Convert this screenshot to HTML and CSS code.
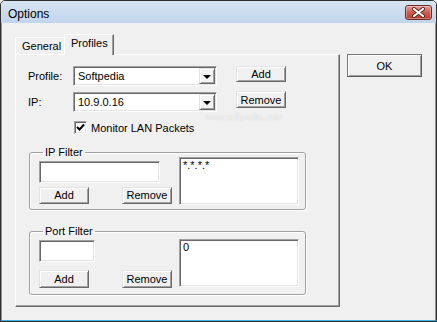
FILE: index.html
```html
<!DOCTYPE html>
<html lang="en">

<head>
    <meta charset="UTF-8">
    <title>Options</title>
    <link rel="stylesheet" href="styles.css">
</head>

<body>
    <div class="window">
        <div class="titlebar">
            <span class="title">Options</span>
            <span class="close">
                <svg width="15" height="11" viewBox="0 0 15 11">
                    <path d="M3 2 L12 9 M12 2 L3 9" stroke="#5a2420" stroke-width="4" stroke-linecap="round" />
                    <path d="M3 2 L12 9 M12 2 L3 9" stroke="#ffffff" stroke-width="2.2" stroke-linecap="round" />
                </svg>
            </span>
        </div>

        <div class="client">
            <div class="tabs">
                <div class="tab-strip">
                    <div class="tab">General</div>
                    <div class="tab active">Profiles</div>
                </div>

                <div class="tab-page">
                    <div class="row">
                        <span class="field-label">Profile:</span>
                        <div class="combo">
                            <span class="combo-text">Softpedia</span>
                            <span class="combo-btn"></span>
                        </div>
                        <button class="btn btn-top">Add</button>
                    </div>

                    <div class="row row-ip">
                        <span class="field-label">IP:</span>
                        <div class="combo">
                            <span class="combo-text">10.9.0.16</span>
                            <span class="combo-btn"></span>
                        </div>
                        <button class="btn btn-top btn-remove-top">Remove</button>
                    </div>

                    <div class="check-row">
                        <span class="checkbox">
                            <svg width="9" height="9" viewBox="0 0 9 9">
                                <path d="M1 4 L3.5 6.5 L8 1.5" fill="none" stroke="#000" stroke-width="2" />
                            </svg>
                        </span>
                        <span>Monitor LAN Packets</span>
                    </div>

                    <fieldset class="group group-ip">
                        <legend>IP Filter</legend>
                        <div class="group-body">
                            <div class="group-left">
                                <div class="textbox textbox-wide"></div>
                                <div class="btn-row">
                                    <button class="btn btn-filter">Add</button>
                                    <button class="btn btn-filter">Remove</button>
                                </div>
                            </div>
                            <div class="listbox">*.*.*.*</div>
                        </div>
                    </fieldset>

                    <fieldset class="group group-port">
                        <legend>Port Filter</legend>
                        <div class="group-body">
                            <div class="group-left">
                                <div class="textbox textbox-narrow"></div>
                                <div class="btn-row">
                                    <button class="btn btn-filter">Add</button>
                                    <button class="btn btn-filter">Remove</button>
                                </div>
                            </div>
                            <div class="listbox">0</div>
                        </div>
                    </fieldset>

                    <div class="watermark-url">www.softpedia.com</div>
                </div>
            </div>

            <div class="side">
                <button class="btn btn-ok">OK</button>
            </div>
        </div>
    </div>
</body>
</html>
```

FILE: styles.css
```css
body {
    margin: 0;
    padding: 0;
    font-family: "Liberation Sans", Arial, sans-serif;
    font-size: 11px;
    color: #000000;
    background-color: #f0f0f0;
}

.window {
    width: 437px;
    height: 322px;
    box-sizing: border-box;
    border: 1px solid #2f2f2f;
    border-radius: 5px 5px 0 0;
    display: flex;
    flex-direction: column;
    overflow: hidden;
}

.titlebar {
    height: 22px;
    flex: none;
    display: flex;
    justify-content: space-between;
    align-items: flex-start;
    padding: 0 4px 0 7px;
    background: linear-gradient(#d7e5f3, #c0d5ec);
}

.title {
    font-size: 12px;
    line-height: 12px;
    margin-top: 7px;
}

.close {
    width: 25px;
    height: 13px;
    margin-top: 4px;
    border: 1px solid #6e2a24;
    border-radius: 3px;
    background: linear-gradient(#e6a096, #cf5c50 50%, #c0392e);
    box-shadow: inset 0 0 0 1px rgba(255, 255, 255, 0.35);
    display: flex;
    justify-content: center;
    align-items: center;
}

.client {
    flex: 1;
    display: flex;
    align-items: flex-start;
    padding: 11px 0 0 13px;
    border: 1px solid #3cb2e4;
    border-top: none;
    background-color: #f0f0f0;
}

/* tabs */
.tabs {
    width: 325px;
    display: flex;
    flex-direction: column;
}

.tab-strip {
    height: 20px;
    display: flex;
    align-items: flex-end;
}

.tab {
    height: 17px;
    box-sizing: border-box;
    padding: 2px 0 0 6px;
    width: 49px;
    border-top: 1px solid #ffffff;
    border-left: 1px solid #ffffff;
    line-height: 13px;
}

.tab.active {
    height: 21px;
    width: 50px;
    margin-bottom: -1px;
    padding-top: 2px;
    position: relative;
    z-index: 1;
    background-color: #f0f0f0;
    border-right: 1px solid #696969;
    box-shadow: inset -1px 0 #a0a0a0;
}

.tab-page {
    position: relative;
    height: 253px;
    box-sizing: border-box;
    padding: 11px 0 0 12px;
    border-top: 1px solid #ffffff;
    border-left: 1px solid #ffffff;
    border-right: 1px solid #696969;
    border-bottom: 1px solid #696969;
    box-shadow: inset -1px -1px #a0a0a0;
}

/* profile rows */
.row {
    display: flex;
    align-items: flex-start;
}

.row-ip {
    margin-top: 6px;
}

.field-label {
    width: 45px;
    line-height: 20px;
}

.combo {
    width: 144px;
    height: 20px;
    box-sizing: border-box;
    background-color: #ffffff;
    border: 1px solid;
    border-color: #a0a0a0 #ffffff #ffffff #a0a0a0;
    box-shadow: inset 1px 1px #696969, inset -1px -1px #e3e3e3;
    display: flex;
    justify-content: space-between;
    align-items: center;
    padding: 0 1px 0 4px;
}

.combo-text {
    line-height: 16px;
}

.combo-btn {
    width: 16px;
    height: 16px;
    box-sizing: border-box;
    background-color: #f4f4f4;
    border: 1px solid;
    border-color: #e3e3e3 #696969 #696969 #e3e3e3;
    box-shadow: inset 1px 1px #ffffff, inset -1px -1px #a0a0a0;
    display: flex;
    justify-content: center;
    align-items: center;
}

.combo-btn::after {
    content: "";
    border-left: 4px solid transparent;
    border-right: 4px solid transparent;
    border-top: 4px solid #000000;
    margin-top: 1px;
}

/* buttons */
.btn {
    font-family: inherit;
    font-size: 11px;
    color: #000000;
    background-color: #f0f0f0;
    box-sizing: border-box;
    padding: 0;
    border: 1px solid;
    border-color: #e3e3e3 #696969 #696969 #e3e3e3;
    box-shadow: inset 1px 1px #ffffff, inset -1px -1px #a0a0a0;
    border-radius: 0;
    cursor: pointer;
}

.btn-top {
    width: 50px;
    height: 16px;
    margin-left: 19px;
    line-height: 12px;
}

.btn-remove-top {
    height: 17px;
    margin-top: -1px;
}

.btn-filter {
    width: 50px;
    height: 17px;
    line-height: 13px;
}

.btn-ok {
    width: 75px;
    height: 23px;
    margin: 20px 0 0 7px;
    border-color: #7a7a7a #595959 #595959 #7a7a7a;
    box-shadow: inset 1px 1px #ffffff, inset -1px -1px #a0a0a0;
}

/* checkbox */
.check-row {
    display: flex;
    align-items: center;
    margin: 9px 0 0 46px;
    height: 13px;
}

.checkbox {
    width: 13px;
    height: 13px;
    box-sizing: border-box;
    margin-right: 4px;
    background-color: #ffffff;
    border: 1px solid;
    border-color: #a0a0a0 #ffffff #ffffff #a0a0a0;
    box-shadow: inset 1px 1px #696969, inset -1px -1px #e3e3e3;
    display: flex;
    justify-content: center;
    align-items: center;
}

/* group boxes */
.group {
    width: 277px;
    box-sizing: border-box;
    margin: 13px 0 0 1px;
    padding: 0 5px 4px 9px;
    border: 1px solid #a0a0a0;
    border-radius: 3px;
    box-shadow: inset 1px 1px #ffffff, 1px 1px #ffffff;
}

.group legend {
    padding: 0 2px;
    margin-left: 4px;
    line-height: 10px;
    font-size: 11px;
}

.group-port {
    margin-top: 16px;
    padding-bottom: 6px;
}

.group-body {
    display: flex;
    align-items: flex-start;
}

.group-left {
    width: 133px;
    display: flex;
    flex-direction: column;
}

.textbox {
    height: 22px;
    margin-top: 4px;
    box-sizing: border-box;
    background-color: #ffffff;
    border: 1px solid;
    border-color: #a0a0a0 #ffffff #ffffff #a0a0a0;
    box-shadow: inset 1px 1px #696969, inset -1px -1px #e3e3e3;
}

.textbox-wide {
    width: 121px;
}

.textbox-narrow {
    width: 56px;
}

.btn-row {
    display: flex;
    justify-content: space-between;
    margin-top: 4px;
}

.group-port .btn-row {
    margin-top: 8px;
}

.group-port .btn-filter {
    height: 18px;
}

.listbox {
    width: 120px;
    height: 48px;
    box-sizing: border-box;
    margin-left: 7px;
    padding: 1px 3px;
    line-height: 13px;
    background-color: #ffffff;
    border: 1px solid;
    border-color: #a0a0a0 #ffffff #ffffff #a0a0a0;
    box-shadow: inset 1px 1px #696969, inset -1px -1px #e3e3e3;
}

.group-port .listbox {
    margin-top: 3px;
}

/* faint site watermark under the IP row */
.watermark-url {
    position: absolute;
    left: 189px;
    top: 57px;
    font-size: 9px;
    color: rgba(255, 255, 255, 0.7);
    text-shadow: 0 0 1px rgba(140, 140, 140, 0.4);
    pointer-events: none;
}
```
